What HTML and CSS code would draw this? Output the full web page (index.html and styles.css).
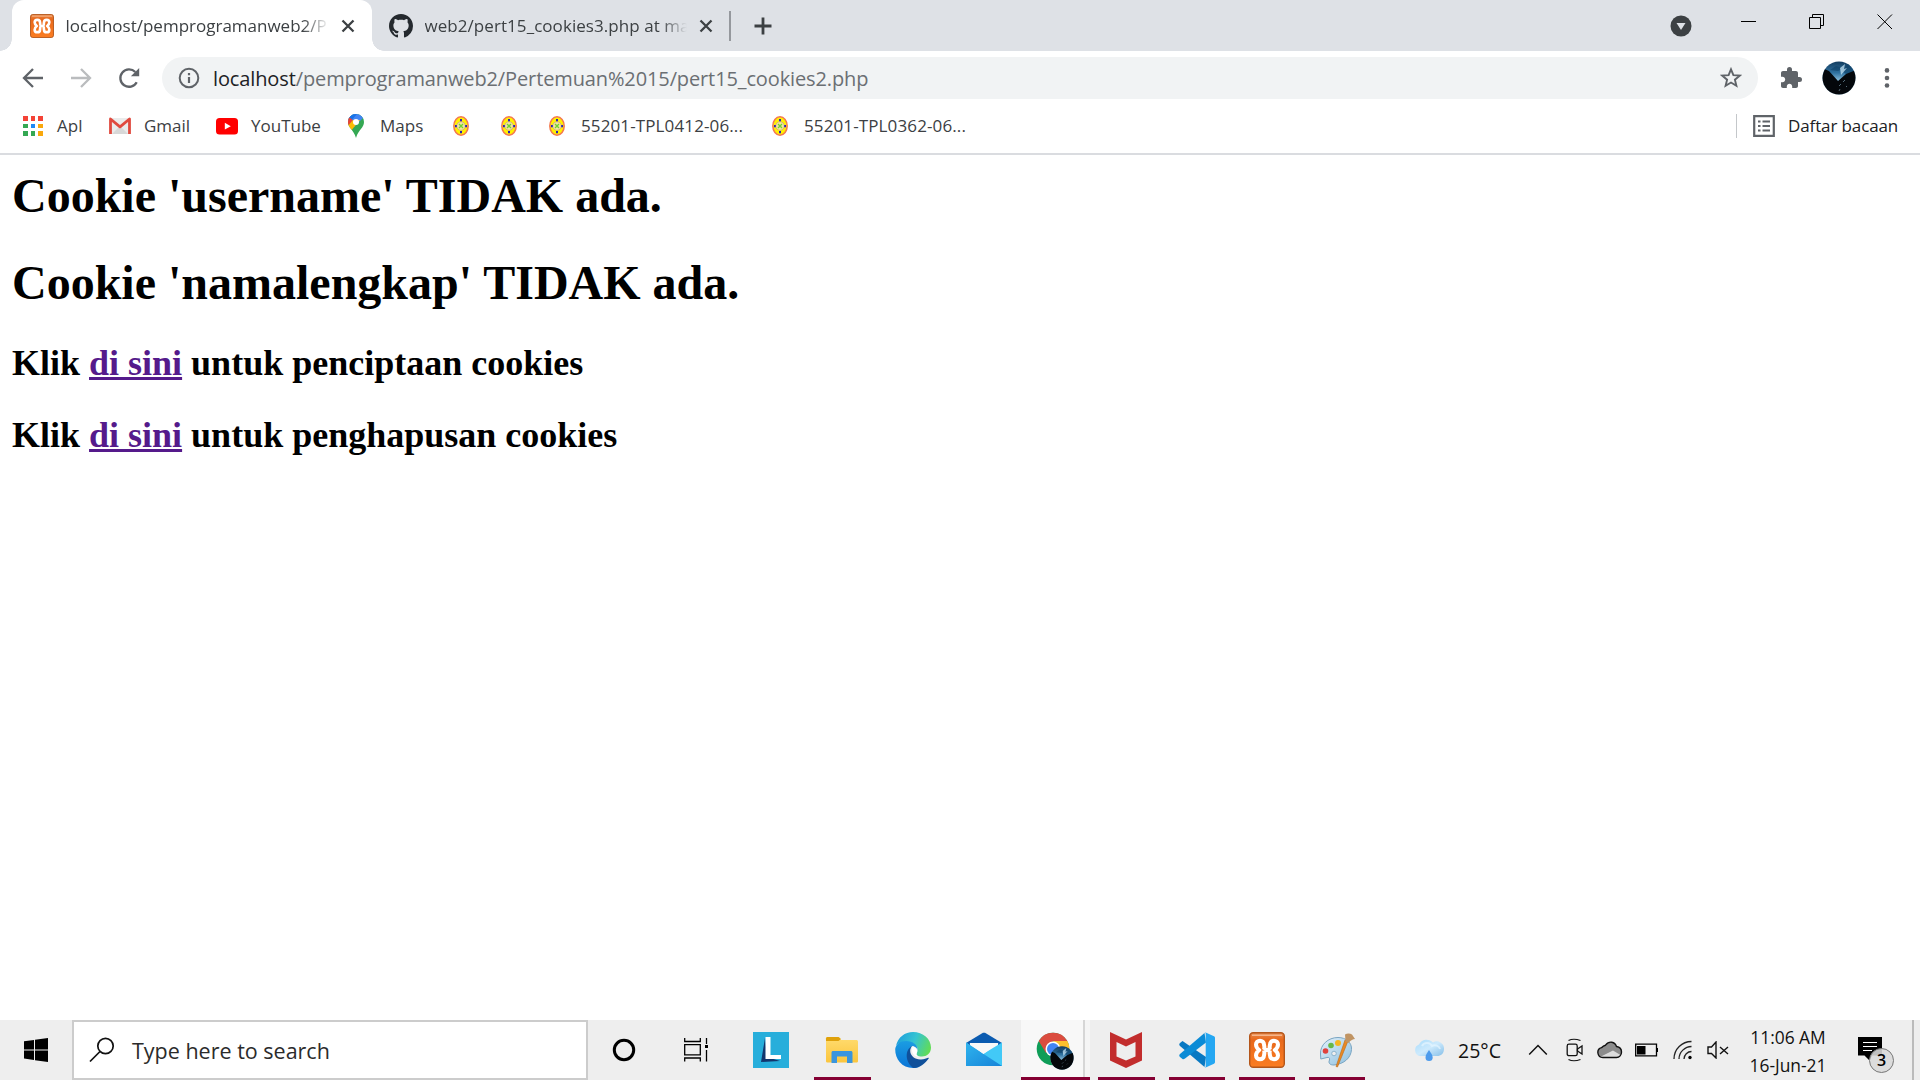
FILE: index.html
```html
<!DOCTYPE html>
<html lang="id">
<head>
<meta charset="utf-8">
<title>localhost/pemprogramanweb2/Pertemuan%2015/pert15_cookies2.php</title>
<link rel="stylesheet" href="styles.css">
</head>
<body>
<svg class="sprite" width="0" height="0" aria-hidden="true">
  <defs>
    <linearGradient id="xg" x1="0" y1="0" x2="0" y2="1"><stop offset="0" stop-color="#e98a4c"/><stop offset=".2" stop-color="#e8691c"/><stop offset="1" stop-color="#fb7d22"/></linearGradient>
    <linearGradient id="av" x1="0" y1="0" x2="0" y2="1"><stop offset="0" stop-color="#123a5c"/><stop offset=".35" stop-color="#2f719f"/><stop offset=".6" stop-color="#8fc3e0"/></linearGradient>
    <clipPath id="avc"><circle cx="17" cy="17" r="16.5"/></clipPath>
    <linearGradient id="edgeTop" x1="0" y1=".3" x2="1" y2=".6"><stop offset="0" stop-color="#1e9fdc"/><stop offset=".5" stop-color="#35c4d2"/><stop offset="1" stop-color="#62dc55"/></linearGradient>
    <linearGradient id="edgeLeft" x1="0" y1="0" x2="0" y2="1"><stop offset="0" stop-color="#1b9de2"/><stop offset="1" stop-color="#0a74d6"/></linearGradient>
    <linearGradient id="folder" x1="0" y1="0" x2="0" y2="1"><stop offset="0" stop-color="#ffdc70"/><stop offset="1" stop-color="#fbc53d"/></linearGradient>
    <linearGradient id="mailA" x1="0" y1="0" x2="1" y2="1"><stop offset="0" stop-color="#2fb4ee"/><stop offset="1" stop-color="#1683d8"/></linearGradient>
    <linearGradient id="cloudG" x1="0" y1="0" x2="1" y2="1"><stop offset="0" stop-color="#a9dcfb"/><stop offset=".5" stop-color="#cdeafd"/><stop offset="1" stop-color="#86bfe8"/></linearGradient>
    <linearGradient id="pal" x1="0" y1="0" x2="1" y2="1"><stop offset="0" stop-color="#e3f1fa"/><stop offset="1" stop-color="#8fc0e0"/></linearGradient>
  </defs>
  <symbol id="xampp" viewBox="0 0 36 36">
    <rect x=".7" y=".7" width="34.6" height="34.6" rx="3.5" fill="url(#xg)" stroke="#b4561a" stroke-width="1.4"/>
    <path d="M3 3.2h30" stroke="#f8c5a0" stroke-width="1.2"/>
    <path d="M14.800 18H21.200M14.800 18C16 16 15.200 14.500 15 12.500a4 3.800 0 0 0-8 0c0 2.500 1.200 4 3.200 5.500-2 1.500-3.200 3-3.200 5.500a4 3.800 0 0 0 8 0c.2-2 1-3.500-.2-5.500M21.200 18c-1.200-2-.4-3.500-.2-5.500a4 3.800 0 0 1 8 0c0 2.500-1.200 4-3.200 5.500 2 1.500 3.200 3 3.200 5.500a4 3.800 0 0 1-8 0c-.2-2-1-3.500.2-5.500" fill="none" stroke="#fff" stroke-width="4" stroke-linejoin="round"/>
  </symbol>
  <symbol id="seal" viewBox="0 0 16 20">
    <ellipse cx="8" cy="10" rx="7.200" ry="9.200" fill="#fff200" stroke="#f4794f" stroke-width="1.500"/>
    <circle cx="8" cy="10" r="4.300" fill="#f3e6a0" stroke="#d3a87c" stroke-width=".9"/>
    <path d="M6 8l4 4M10 8l-4 4" stroke="#6fd32e" stroke-width="1.300"/>
    <path d="M7 3h2v2.200H7zM7 15h2v2.200H7zM2 9h1.800v2.200H2zM12.200 9H14v2.200h-1.800z" fill="#2b22b8"/>
  </symbol>
  <symbol id="avatar" viewBox="0 0 34 34">
    <g clip-path="url(#avc)">
      <rect width="34" height="34" fill="url(#av)"/>
      <path d="M8 9l6-4 8 2-6 3zM20 10l6-8 6 8-4 6z" fill="#0d3f66" opacity=".6"/>
      <path d="M18 7l5-4-1 5 3-1-6 7z" fill="#c5e4f4" opacity=".75"/>
      <path d="M0 7l7 3 9 10 8-7 10-4v25H0z" fill="#04070b"/>
      <path d="M17 25l2-2M18 28l-1 2M21 21l2-2M24 26l1-1" stroke="#526a77" stroke-width="1" fill="none"/>
    </g>
  </symbol>
</svg>

<div class="screen">
  <header class="browser">
    <div class="tabs">
      <div class="tab active">
        <svg class="fav" width="24" height="24"><use href="#xampp"/></svg>
        <span class="tab-title">localhost/pemprogramanweb2/P</span>
        <svg class="x" width="14" height="14" viewBox="0 0 14 14"><path d="M1.500 1.500l11 11M12.500 1.500l-11 11"/></svg>
      </div>
      <div class="tab">
        <svg class="fav" width="24" height="24" viewBox="0 0 16 16"><path fill="#24292e" d="M8 0C3.580 0 0 3.580 0 8c0 3.540 2.290 6.530 5.470 7.590.4.070.55-.17.55-.38 0-.19-.01-.82-.01-1.490-2.010.37-2.530-.49-2.690-.94-.09-.23-.48-.94-.82-1.130-.28-.15-.68-.52-.01-.53.63-.01 1.080.58 1.230.82.72 1.210 1.870.87 2.330.66.07-.52.28-.87.51-1.070-1.780-.2-3.640-.89-3.640-3.950 0-.87.31-1.590.82-2.150-.08-.2-.36-1.020.08-2.120 0 0 .67-.21 2.200.82.64-.18 1.320-.27 2-.27s1.360.09 2 .27c1.530-1.040 2.200-.82 2.200-.82.44 1.100.16 1.920.08 2.120.51.56.82 1.270.82 2.150 0 3.070-1.870 3.750-3.650 3.950.29.25.54.73.54 1.480 0 1.070-.01 1.930-.01 2.200 0 .21.15.46.55.38A8.010 8.010 0 0 0 16 8c0-4.420-3.580-8-8-8z"/></svg>
        <span class="tab-title second">web2/pert15_cookies3.php at ma</span>
        <svg class="x" width="14" height="14" viewBox="0 0 14 14"><path d="M1.500 1.500l11 11M12.500 1.500l-11 11"/></svg>
      </div>
      <span class="tab-sep"></span>
      <svg class="plus" width="18" height="18" viewBox="0 0 18 18"><path d="M9 .5v17M.5 9h17" stroke="#3c4043" stroke-width="2.800"/></svg>
      <svg class="drop" width="22" height="22" viewBox="0 0 22 22"><circle cx="11" cy="11" r="10.500" fill="#3c4043"/><path d="M6.500 8h9L11 15z" fill="#dee1e6"/></svg>
      <div class="win">
        <svg width="16" height="16" viewBox="0 0 16 16"><path d="M0 7.500h15"/></svg>
        <svg width="16" height="16" viewBox="0 0 16 16"><path d="M.5 3.500h11v11H.5zM3.500 3.500v-3h11v11h-3"/></svg>
        <svg width="16" height="16" viewBox="0 0 16 16"><path d="M.5.5l14.500 14.500M15 .5L.5 15"/></svg>
      </div>
    </div>

    <div class="toolbar">
      <svg class="nav" width="22" height="22" viewBox="0 0 22 22"><path d="M21 11H2.500M11 2l-9 9 9 9"/></svg>
      <svg class="nav off" width="22" height="22" viewBox="0 0 22 22"><path d="M1 11h18.500M11 2l9 9-9 9"/></svg>
      <svg class="nav" width="22" height="22" viewBox="0 0 22 22"><path d="M18.700 15.200A8.700 8.700 0 1 1 17.300 5"/><path d="M21.200 1v8.300h-8.300z" fill="#5f6368" stroke="none"/></svg>
      <div class="omnibox">
        <svg width="22" height="22" viewBox="0 0 22 22"><circle cx="11" cy="11" r="9.300" fill="none" stroke="#5f6368" stroke-width="2"/><path d="M11 6v2.200M11 10v6" stroke="#5f6368" stroke-width="2.200"/></svg>
        <span class="url"><b>localhost</b>/pemprogramanweb2/Pertemuan%2015/pert15_cookies2.php</span>
        <svg class="star" width="22" height="22" viewBox="0 0 22 22"><path d="M11 2.300l2.400 5.800 6.300.5-4.800 4.100 1.500 6.100-5.400-3.300-5.400 3.300 1.500-6.100-4.800-4.100 6.300-.5z" fill="none" stroke="#5f6368" stroke-width="1.900"/></svg>
      </div>
      <svg class="puzzle" width="24" height="24" viewBox="0 0 24 24"><path fill="#5f6368" d="M20.500 11H19V7c0-1.100-.9-2-2-2h-4V3.500a2.500 2.500 0 0 0-5 0V5H4c-1.100 0-1.990.9-1.990 2v3.800H3.500c1.490 0 2.700 1.210 2.700 2.700s-1.210 2.700-2.700 2.700H2V20c0 1.100.9 2 2 2h3.800v-1.500c0-1.490 1.210-2.700 2.700-2.700s2.700 1.210 2.700 2.700V22H17c1.100 0 2-.9 2-2v-4h1.500a2.500 2.500 0 0 0 0-5z"/></svg>
      <svg class="profile" width="34" height="34"><use href="#avatar"/></svg>
      <svg class="menu" width="6" height="22" viewBox="0 0 6 22" fill="#5f6368"><circle cx="3" cy="3.400" r="2.300"/><circle cx="3" cy="11" r="2.300"/><circle cx="3" cy="18.500" r="2.300"/></svg>
    </div>

    <nav class="bookmarks">
      <a class="bm"><svg width="24" height="24" viewBox="0 0 24 24"><path fill="#f44336" d="M2 2h5v5H2zM10 2h4v5h-4zM17 2h5v5h-5z"/><path fill="#34a853" d="M2 10h5v4H2zM2 17h5v5H2z"/><path fill="#1e88f5" d="M10 10h4v4h-4z"/><path fill="#f9a80c" d="M17 10h5v4h-5zM17 17h5v5h-5z"/><path fill="#34a853" d="M10 17h4v5h-4z"/></svg><span>Apl</span></a>
      <a class="bm"><svg width="24" height="24" viewBox="0 0 24 24"><path d="M3 4h18v16H3z" fill="#ebebeb"/><path d="M4 20l8-8 8 8" fill="#d8d8d8"/><path d="M2.500 20V5L12 12.800 21.500 5v15" fill="none" stroke="#e04a3f" stroke-width="2.800" stroke-linejoin="round"/></svg><span>Gmail</span></a>
      <a class="bm"><svg width="24" height="24" viewBox="0 0 24 24"><rect x="1" y="4" width="22" height="16.500" rx="3.500" fill="#f00"/><path d="M9.800 8.800l6 3.400-6 3.400z" fill="#fff"/></svg><span>YouTube</span></a>
      <a class="bm"><svg width="24" height="24" viewBox="0 0 24 24"><clipPath id="pin"><path d="M12 0a8 8 0 0 0-8 8c0 6 5.500 7.500 8 16 2.500-8.500 8-10 8-16a8 8 0 0 0-8-8z"/></clipPath><g clip-path="url(#pin)"><path fill="#34a853" d="M0 0h24v24H0z"/><path fill="#4285f4" d="M7 0h16L10 13 3 5z"/><path fill="#1a73e8" d="M0 0h13L7 7z"/><path fill="#ea4335" d="M3 1.500l6 4.800L4 13z"/><path fill="#fbbc04" d="M9 6L3 13l3 5 10-12z"/></g><circle cx="12" cy="8" r="3" fill="#fff"/></svg><span>Maps</span></a>
      <a class="bm"><svg width="24" height="20" viewBox="0 0 24 20"><use href="#seal" x="4" width="16" height="20"/></svg></a>
      <a class="bm"><svg width="24" height="20" viewBox="0 0 24 20"><use href="#seal" x="4" width="16" height="20"/></svg></a>
      <a class="bm code"><svg width="24" height="20" viewBox="0 0 24 20"><use href="#seal" x="4" width="16" height="20"/></svg><span>55201-TPL0412-06...</span></a>
      <a class="bm code"><svg width="24" height="20" viewBox="0 0 24 20"><use href="#seal" x="4" width="16" height="20"/></svg><span>55201-TPL0362-06...</span></a>
      <a class="bm reading"><svg width="24" height="24" viewBox="0 0 24 24"><path d="M2.200 2.200h19.600v19.600H2.200z" fill="none" stroke="#5f6368" stroke-width="2.200"/><path d="M6 7.500h2.500M10.500 7.500H18M6 12h2.500M10.500 12H18M6 16.500h2.500M10.500 16.500H18" stroke="#5f6368" stroke-width="2.200"/></svg><span>Daftar bacaan</span></a>
    </nav>
  </header>

  <main class="page">
    <h1>Cookie 'username' TIDAK ada.</h1>
    <h1>Cookie 'namalengkap' TIDAK ada.</h1>
    <h2>Klik <a href="#">di sini</a> untuk penciptaan cookies</h2>
    <h2>Klik <a href="#">di sini</a> untuk penghapusan cookies</h2>
  </main>

  <footer class="taskbar">
    <div class="start"><svg width="24" height="24" viewBox="0 0 24 24"><path d="M0 3.300l10-1.400v9.500H0zM11 1.700L24 0v11.400H11zM0 12.500h10v9.400L0 20.600zM11 12.500h13V24l-13-1.800z"/></svg></div>
    <div class="search"><svg width="26" height="26" viewBox="0 0 26 26"><circle cx="16.500" cy="9" r="7.700" fill="none" stroke="#111" stroke-width="1.700"/><path d="M11 14.500L1 24.500" stroke="#111" stroke-width="1.700"/></svg><span>Type here to search</span></div>
    <div class="apps">
      <div class="app"><svg width="24" height="24" viewBox="0 0 24 24"><circle cx="12" cy="12" r="9.700" fill="none" stroke="#000" stroke-width="3"/></svg></div>
      <div class="app"><svg width="24" height="24" viewBox="0 0 24 24"><path d="M.7 0v3.500h15.600V0M.7 6.600h15.600v10.300H.7zM.7 23.500V20h15.600v3.500M22.500 0v6M22.500 12v11.500" fill="none" stroke="#000" stroke-width="1.300"/><path d="M21 7h3v3h-3z"/></svg></div>
      <span></span>
      <div class="app"><svg width="36" height="36" viewBox="0 0 36 36"><path fill="#27aedb" d="M0 0h36v36H0z"/><path d="M12 6L8 30l19-1-13-4z" fill="#12366d"/><path d="M12.500 5h5v18H28v4H12.500z" fill="#fff"/></svg></div>
      <span></span>
      <div class="app open"><svg width="36" height="36" viewBox="0 0 36 36"><path d="M2 8a2 2 0 0 1 2-3h11l2 3h15c1.500 0 2 .5 2 2v19c0 1-.5 1.500-2 1.500H4c-1.500 0-2-.5-2-1.500z" fill="url(#folder)"/><path d="M2 9V7c0-1.500.5-2 2-2h10.500l2.500 2-2.500 2z" fill="#dfa10b"/><path d="M7.500 31V21c0-1.500.5-2 2-2h17c1.500 0 2 .5 2 2v10h-5.500v-6.500H13V31z" fill="#3a95de"/></svg></div>
      <span></span>
      <div class="app"><svg width="36" height="36" viewBox="0 0 36 36"><path d="M1 14C3 5 10 0 18 0c10 0 18 7 18 15.500 0 6-4.500 9-9 9-4 0-6.500-1.500-5.300-3.200C25 16 20 10 12 10 7 10 3 11 1 14z" fill="url(#edgeTop)"/><path d="M.2 17C1 12 5 9 11 9c7 0 12 4 11.500 9-1-3-3.500-4-5.500-4-4 3-4 17 8 20.500-2 1-4.500 1.500-7 1.500C7 36 0 27 .2 17z" fill="url(#edgeLeft)"/><path d="M17.200 14c-3.500 3-3 12.500 8 13.500 3.500.3 6-1 7.800-1.700.8-.3 1 .3.500 1C30.500 31 25 36 18.500 36 10.500 31 9 18 17.200 14z" fill="#10509a"/><path d="M18 14.500c-2 2-1 6 1 8.500 1 1 3 1.700 4.500 1.700-1.500-1-2.500-2-1.800-3.400 1.200-2.500 0-5.500-3.700-6.800z" fill="#fff"/></svg></div>
      <span></span>
      <div class="app"><svg width="36" height="36" viewBox="0 0 36 36"><path d="M0 11L17 .7h2L36 11v3H0z" fill="#0b5bb0"/><path d="M4 11h28v14H4z" fill="#f8f8f8"/><path d="M0 10.500l17 11.500L36 10.500V34H0z" fill="#42c9f7"/><path d="M0 10.500L36 34H0z" fill="url(#mailA)"/><path d="M3.500 11h29L17.500 22z" fill="#f8f8f8"/></svg></div>
      <span></span>
      <div class="app current"><svg width="38" height="38" viewBox="0 0 38 38"><circle cx="17" cy="17" r="16.300" fill="#0f9d58"/><path d="M2.700 9A16.500 16.500 0 0 1 31.400 9H17l-7 12z" fill="#db4c3f"/><path d="M17 9h14.400A16.500 16.500 0 0 1 17 33.500l7-12.500z" fill="#fbc02d"/><circle cx="17" cy="17" r="7.500" fill="#fff"/><circle cx="17" cy="17" r="6" fill="#4285f4"/><use href="#avatar" x="14" y="14" width="24" height="24"/></svg></div>
      <span></span>
      <div class="app open"><svg width="36" height="36" viewBox="0 0 36 36"><path fill="#c22d2d" d="M2 0l16 7.500L34 0v28.500L18 36 2 28.500zM8.500 10v14.500l9.500 4 9.500-4V10L18 14.500z" fill-rule="evenodd"/></svg></div>
      <span></span>
      <div class="app open"><svg width="36" height="36" viewBox="0 0 36 36"><path d="M3.500 9L1 11c-1 1-1 2 0 3l24.500 21L27 25z" fill="#0878c2"/><path d="M3.500 27L1 25c-1-1-1-2 0-3L25.500 1 27 10.500 6 26.500c-1 .7-1.700 1-2.500.5z" fill="#0b8bd6"/><path d="M25.500 0L35 4.300c.7.400 1 .8 1 1.600v24.200c0 .8-.3 1.200-1 1.600L25.500 36c1-.5 1.200-1 1.200-2V2c0-1-.2-1.500-1.200-2z" fill="#25a7f2"/></svg></div>
      <span></span>
      <div class="app open"><svg width="36" height="36"><use href="#xampp"/></svg></div>
      <span></span>
      <div class="app open"><svg width="36" height="36" viewBox="0 0 36 36"><path d="M1.500 22C1 13 9 5.500 19 5.500c8 0 14 5 13.500 12C32 26 25 32 15 33c-4 .2-6-2-4.500-5 .5-2-.5-3-2.500-2.500L1.800 27z" fill="url(#pal)" stroke="#7aa5c2" stroke-width="1"/><circle cx="15" cy="21.500" r="2.300" fill="#eee" stroke="#8db4cf"/><circle cx="6.500" cy="19" r="2.800" fill="#e0413c"/><circle cx="12" cy="13.500" r="2.800" fill="#66b848"/><circle cx="19" cy="11" r="3" fill="#f5b622"/><path d="M29 9l-10.500 26-1.500-.5L26 8z" fill="#e98924" stroke="#b96817" stroke-width=".6"/><path d="M26.500 9.500L26 2.500c2-1.500 5-1.500 7 0L36 7c-2 0-4 1-6.500 4z" fill="#c09463"/></svg></div>
    </div>
    <div class="tray">
      <svg class="weather" width="32" height="24" viewBox="0 0 32 24"><path d="M7 18a6 6 0 0 1-1-11.500A8.500 8.500 0 0 1 20 4.500a7.200 7.200 0 0 1 11 6.500c0 4.500-3 7-7 7z" fill="url(#cloudG)"/><path d="M9 8c2-4 8-4 10 0 3-2 7 0 8 3" fill="none" stroke="#e6f5ff" stroke-width="2" opacity=".7"/><path d="M16 12c-1.700 3-3.500 4.800-3.500 7.500a3.600 3.600 0 0 0 7.200 0c0-2.700-2-4.500-3.700-7.500z" fill="#4d9bec"/></svg>
      <span class="temp">25°C</span>
      <svg class="t1" width="20" height="12" viewBox="0 0 20 12"><path d="M1.200 10.500L10 1.500l8.800 9" fill="none" stroke="#111" stroke-width="1.500"/></svg>
      <svg class="t2" width="18" height="24" viewBox="0 0 18 24"><path d="M2.500 2.500q5-2.500 12 0M2.500 21.500q5 2.500 12 0" fill="none" stroke="#111" stroke-width="1.200"/><rect x="1.200" y="6.200" width="10" height="11.500" rx="1.800" fill="none" stroke="#111" stroke-width="1.300"/><path d="M11.500 11l4.500-3v8l-4.500-3z" fill="none" stroke="#111" stroke-width="1.300"/></svg>
      <svg class="t3" width="26" height="18" viewBox="0 0 26 18"><path d="M6 16.500a5 5 0 0 1-1.500-9.800C6 5 7 4.500 8.500 4.200 12-.5 18 .5 19.500 5.500c3 .5 5 2.500 5 5.500s-2 5.500-5 5.500z" fill="#8c8c8c"/><path d="M4 15.500l12-6 7.500 4.500-4 2.500H6z" fill="#ddd"/><path d="M6 16.500a5 5 0 0 1-1.500-9.800C6 5 7 4.500 8.500 4.200 12-.5 18 .5 19.500 5.500c3 .5 5 2.500 5 5.500s-2 5.500-5 5.500z" fill="none" stroke="#111" stroke-width="1.400"/></svg>
      <svg class="t4" width="24" height="14" viewBox="0 0 24 14"><path d="M.7 1.200h20.800v11.600H.7z" fill="none" stroke="#000" stroke-width="1.300"/><path d="M2 3h8.500v8.500H2zM21.500 5H23v4h-1.500z"/></svg>
      <svg class="t5" width="20" height="20" viewBox="0 0 20 20"><path d="M1 19C1 9 9 1.500 18.500 1.500M6 19C6 12 12 6.500 18.500 6.500M11 19c0-4 3.500-7.500 7.500-7.500" fill="none" stroke="#222" stroke-width="1.300"/><circle cx="17" cy="17.500" r="1.700"/></svg>
      <svg class="t6" width="22" height="18" viewBox="0 0 22 18"><path d="M1 6h3.500L9 1v16l-4.500-4.500H1zM13 6l8 7M21 6l-8 7" fill="none" stroke="#111" stroke-width="1.400"/></svg>
      <div class="clock"><span>11:06 AM</span><span>16-Jun-21</span></div>
      <div class="notes"><svg width="24" height="24" viewBox="0 0 24 24"><path d="M0 0h24v18.500H14.500L11 23l-4.500-4.500H0z"/><path d="M5 5.500h14M5 9.500h14M5 13.500h9" stroke="#fff" stroke-width="1.200"/></svg><span class="badge">3</span></div>
      <span class="peek"></span>
    </div>
  </footer>
</div>
</body>
</html>
```
FILE: styles.css
```css
* { box-sizing: border-box; }
body { margin: 0; background: #fff; font-family: "Open Sans", "Noto Sans", sans-serif; color: #3c4043; }
svg { display: block; flex: none; }
.sprite { position: absolute; }
.screen { display: flex; flex-direction: column; width: 1920px; height: 1080px; overflow: hidden; }

.browser { height: 155px; border-bottom: 2px solid #dadce0; }
.tabs { display: flex; align-items: center; height: 51px; padding-left: 12px; background: #dee1e6; }
.tab { position: relative; display: flex; align-items: center; width: 358px; height: 51px; padding-left: 17px; }
.tab.active { width: 360px; padding-left: 18px; background: #fff; border-radius: 12px 12px 0 0; }
.tab.active::before, .tab.active::after { content: ""; position: absolute; bottom: 0; width: 12px; height: 12px; }
.tab.active::before { left: -12px; background: radial-gradient(circle at 0 0, transparent 11.500px, #fff 12px); }
.tab.active::after { right: -12px; background: radial-gradient(circle at 100% 0, transparent 11.500px, #fff 12px); }
.tab-title { width: 263px; margin: 0 12px 0 11.500px; white-space: nowrap; font-size: 17px; letter-spacing: 0; -webkit-mask-image: linear-gradient(90deg, #000 90%, transparent); mask-image: linear-gradient(90deg, #000 90%, transparent); }
.tab-title.second { width: 262px; letter-spacing: .06px; }
.x { stroke: #3c4043; stroke-width: 2.300; fill: none; }
.tab-sep { width: 2px; height: 30px; margin-left: -1px; background: #95989d; }
.plus { margin-left: 23px; }
.drop { margin-left: 898px; }
.win { display: flex; gap: 52px; margin: -8px 0 0 49px; fill: none; stroke: #000; stroke-width: 1; }

.toolbar { display: flex; align-items: center; height: 54px; padding-left: 22px; }
.nav { margin-right: 26px; fill: none; stroke: #5f6368; stroke-width: 2.300; }
.nav.off { stroke: #babcbe; }
.nav:nth-child(3) { margin-right: 22px; }
.omnibox { display: flex; align-items: center; width: 1596px; height: 42px; padding-left: 16px; border-radius: 21px; background: #f1f3f4; }
.url { margin-left: 13px; white-space: nowrap; font-size: 20px; letter-spacing: -.12px; color: #6b6f73; }
.url b { font-weight: 400; color: #202124; }
.star { margin: 0 16px 0 auto; }
.puzzle { margin-left: 21px; }
.profile { margin-left: 19px; }
.menu { margin-left: 28px; }

.bookmarks { display: grid; grid-template-columns: 87px 107px 129px 105px 48px 48px 223px 200px 1fr; align-items: center; height: 42px; padding: 0 0 0 21px; font-size: 17px; }
.bm { display: flex; align-items: center; gap: 12px; white-space: nowrap; }
.bm span { margin-top: -2px; }
.code { letter-spacing: .12px; }
.reading { justify-self: end; width: 184px; height: 24px; padding-left: 15px; border-left: 1px solid #c4c7ca; color: #202124; letter-spacing: -.12px; }

.page { flex: 1; padding: 13px 12px; font-family: "Liberation Serif", "Times New Roman", serif; color: #000; }
h1 { margin: 0 0 32px; font-size: 48px; line-height: 55px; }
h2 { margin: 0 0 30px; font-size: 36px; line-height: 42px; }
h2 a { color: #551a8b; }

.taskbar { display: flex; height: 60px; background: #eee; color: #111; }
.start { display: flex; align-items: center; justify-content: center; width: 72px; }
.search { display: flex; align-items: center; gap: 17px; width: 516px; padding-left: 15px; border: 2px solid #ccc; background: #fff; font-size: 21.500px; color: #2b2b2b; }
.search span { margin-top: 1px; }
.apps { display: grid; grid-template-columns: 72px 72px 10px 58px 14px 57px 13px 58px 13px 58px 8px 69px 8px 57px 14px 56px 14px 56px 14px 56px; }
.app { display: flex; align-items: center; justify-content: center; height: 60px; }
.open, .current { border-bottom: 3px solid #850033; padding-top: 3px; }
.open { padding-right: 1px; }
.current { padding: 5px 1px 0 0; background: linear-gradient(90deg, #f8f8f8 62px, #d6d6d6 62px, #d6d6d6 64px, #f5f5f5 64px); }
.tray { display: flex; align-items: center; flex: 1; }
.weather { margin-left: 48px; }
.temp { width: 48px; margin: 1px 0 0 13px; font-size: 19.500px; }
.t1 { margin-left: 22px; }
.t2 { margin-left: 18px; }
.t3 { margin-left: 13px; }
.t4 { margin-left: 12px; }
.t5 { margin-left: 14px; }
.t6 { margin-left: 14px; }
.clock { display: flex; flex-direction: column; align-items: center; width: 90px; margin: 1px 0 0 14px; font-size: 17.400px; line-height: 28px; }
.notes { position: relative; margin: -2px 0 0 25px; }
.badge { position: absolute; left: 11px; top: 11px; width: 25px; height: 25px; border: 1px solid #777; border-radius: 50%; background: rgba(218, 218, 218, .88); color: #000; font-size: 16px; font-weight: 600; line-height: 23px; text-align: center; }
.peek { width: 2px; height: 60px; margin-left: 30px; background: #bbb; }
```
